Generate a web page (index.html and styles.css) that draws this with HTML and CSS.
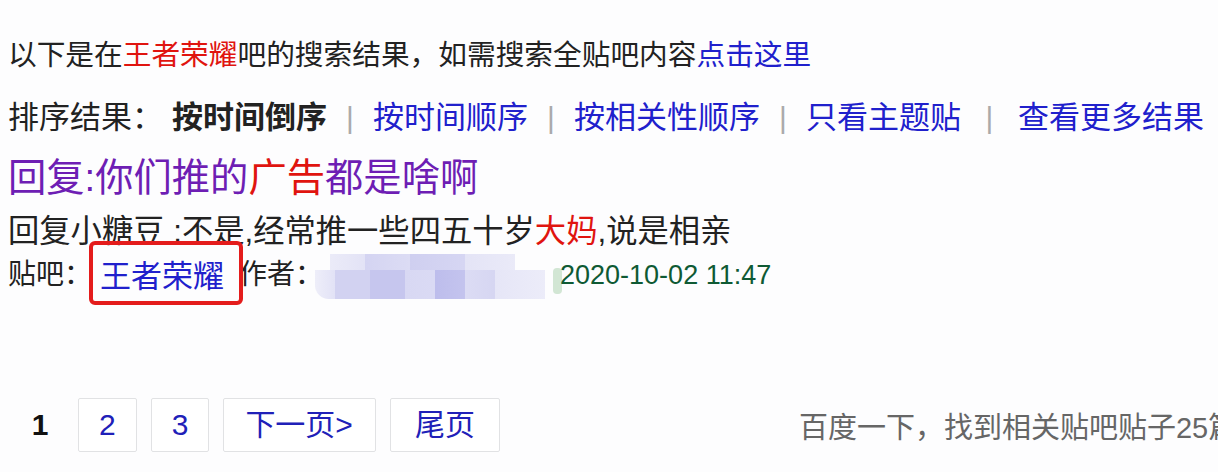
FILE: index.html
```html
<!DOCTYPE html>
<html lang="zh-CN">
<head>
  <meta charset="UTF-8">
  <title>王者荣耀吧 搜索结果</title>
  <link rel="stylesheet" href="styles.css">
</head>
<body>
<div class="page">
  <p class="tip">以下是在<em class="hl">王者荣耀</em>吧的搜索结果，如需搜索全贴吧内容<a href="#" class="link">点击这里</a></p>

  <div class="sort">
    排序结果：<b class="sort-cur">按时间倒序</b><span class="sep">|</span><a href="#" class="link">按时间顺序</a><span class="sep">|</span><a href="#" class="link">按相关性顺序</a><span class="sep">|</span><a href="#" class="link">只看主题贴</a><span class="sep sep-wide">|</span><a href="#" class="link">查看更多结果</a>
  </div>

  <div class="post">
    <a href="#" class="post-title">回复:你们推的<em class="hl">广告</em>都是啥啊</a>
    <div class="post-body">回复小糖豆 :不是,经常推一些四五十岁<em class="hl">大妈</em>,说是相亲</div>
    <div class="post-meta">
      贴吧：<span class="mark"><a href="#" class="link">王者荣耀</a></span>作者：<span class="blur"></span><span class="smudge"></span><span class="date">2020-10-02 11:47</span>
    </div>
  </div>

  <div class="pager">
    <span class="pager-cur">1</span>
    <a href="#" class="pager-item">2</a>
    <a href="#" class="pager-item">3</a>
    <a href="#" class="pager-item pager-next">下一页&gt;</a>
    <a href="#" class="pager-item pager-last">尾页</a>
    <span class="pager-total">百度一下，找到相关贴吧贴子25篇</span>
  </div>
</div>
</body>
</html>
```

FILE: styles.css
```css
* {
  margin: 0;
  padding: 0;
  box-sizing: border-box;
}

body {
  background: #fdfdfe;
  color: #222;
  font-family: 'Liberation Sans', 'Noto Sans CJK SC', sans-serif;
  overflow: hidden;
}

a {
  text-decoration: none;
}

em {
  font-style: normal;
}

.page {
  padding: 35px 0 0 8px;
  white-space: nowrap;
}

.hl {
  color: #e0140f;
}

.link {
  color: #2020cc;
}

.tip {
  font-size: 28.7px;
  line-height: 40px;
}

.sort {
  margin-top: 20px;
  font-size: 31px;
  line-height: 46px;
}

.sort-cur {
  margin-left: 9px;
  font-weight: bold;
  color: #222;
}

.sep {
  display: inline-block;
  width: 46px;
  text-align: center;
  color: #aaa;
  font-size: 30px;
  vertical-align: top;
}

.sep-wide {
  width: 57px;
}

.post {
  margin-top: 12px;
}

.post-title {
  display: block;
  color: #6e1eb4;
  font-size: 38.3px;
  line-height: 50px;
}

.post-body {
  margin-top: 7px;
  font-size: 31.3px;
  line-height: 44px;
}

.post-meta {
  font-size: 28px;
  line-height: 42px;
}

.mark {
  display: inline-block;
  height: 64px;
  margin: -15px -4px -7px -3px;
  padding: 0 15px 0 7px;
  border: 4px solid #e41c1c;
  border-radius: 6px;
  font-size: 31px;
  line-height: 64px;
  vertical-align: middle;
  position: relative;
}

.blur {
  display: inline-block;
  width: 230px;
  height: 45px;
  margin: -6px 0 -6px -8px;
  vertical-align: middle;
  border-radius: 14px 0 0 14px;
  background:
          linear-gradient(to right, transparent 0, transparent 15px, #ebebf8 15px, #e3e3f6 50px, #d4d4f2 50px, #dcdcf4 95px, #cfcff0 95px, #d6d6f3 150px, #e4e4f6 150px, #eaeaf8 200px, transparent 200px) top / 100% 16px no-repeat,
          linear-gradient(to right, #eeeef9 0, #e2e2f6 20px, #d2d2f1 20px, #d2d2f1 55px, #c6c6ee 55px, #c6c6ee 90px, #d8d8f3 90px, #dadaf4 120px, #bdbdec 120px, #c4c4ee 150px, #dcdcf4 150px, #d6d6f2 180px, #e6e6f7 180px, #ececf9 230px) bottom / 100% 29px no-repeat;
}

.smudge {
  display: inline-block;
  width: 9px;
  height: 26px;
  margin: 0 -2px -10px 8px;
  vertical-align: baseline;
  border-radius: 4px;
  background: #d2e6d4;
}

.date {
  color: #0f5a34;
  font-size: 27px;
}

.pager {
  display: flex;
  align-items: center;
  margin-top: 100px;
  padding-left: 12px;
  font-size: 30px;
}

.pager > * {
  flex-shrink: 0;
}

.pager-cur {
  width: 40px;
  margin-right: 18px;
  text-align: center;
  font-weight: bold;
  color: #111;
}

.pager-item {
  height: 54px;
  margin-right: 14px;
  padding: 0 20px;
  border: 1px solid #e1e2e4;
  border-radius: 2px;
  background: #fff;
  color: #2020b8;
  line-height: 52px;
}

.pager-next {
  padding: 0 22px 0 21px;
}

.pager-last {
  padding: 0 24px;
}

.pager-total {
  margin-left: 285px;
  color: #666;
  font-size: 29px;
}
```
